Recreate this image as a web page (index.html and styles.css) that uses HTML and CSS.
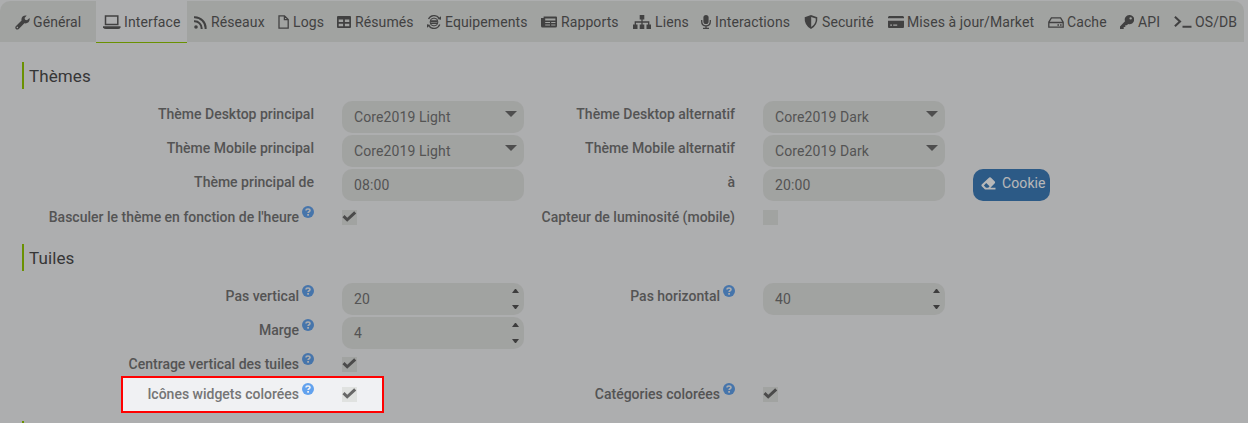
FILE: index.html
```
<!DOCTYPE html>
<html lang="fr">
<head>
<meta charset="utf-8">
<title>Configuration</title>
<link rel="stylesheet" href="styles.css">
</head>
<body>
<svg class="defs" width="0" height="0">
<symbol id="help" viewBox="0 0 12 12"><circle cx="6" cy="6" r="6" fill="#62a2ee"/><path d="M4 4.6C4 2.4 8 2.4 8 4.6C8 5.8 6.1 5.7 6.1 7.1" fill="none" stroke="#f0f1f3" stroke-width="1.6"/><rect x="5.2" y="8" width="1.8" height="1.7" fill="#f0f1f3"/></symbol>
<symbol id="check" viewBox="0 0 15 15"><path d="M1.5 6.2L5.2 9.8L13.2 2.4" fill="none" stroke="currentColor" stroke-width="3"/></symbol>
</svg>
<nav class="tabs">
<a class="tab t-general"><svg width="15" height="15" viewBox="0 0 16 16"><path fill="currentColor" d="M15.5 3.3L12.8 5.5L10.8 5.1L10.2 3.1L12.5.6C9 0 6.2 2.3 7 5.8L.8 12Q-.3 13.4.9 14.8Q2.4 16.1 4 14.8L10 8.9C13.6 9.7 16.5 6.5 15.5 3.3ZM2.5 14A.8.8 0 1 1 2.6 12.4A.8.8 0 0 1 2.5 14Z"/></svg><span>Général</span></a>
<a class="tab t-interface active"><svg width="18" height="14" viewBox="0 0 18 14"><path fill="none" stroke="currentColor" stroke-width="1.5" d="M2.5 1H14.8V9.6H2.5Z"/><path fill="currentColor" d="M0 11.3H17.5V12.5Q17 14 15 14H3Q1 14 0 12.5Z"/></svg><span>Interface</span></a>
<a class="tab t-reseaux"><svg width="13" height="13" viewBox="0 0 13 13"><g fill="none" stroke="currentColor" stroke-width="2"><path d="M0 1.2A11 11 0 0 1 11.6 13M0 5.3A7 7 0 0 1 7.6 13"/></g><circle cx="2" cy="11" r="1.8" fill="currentColor"/></svg><span>Réseaux</span></a>
<a class="tab t-logs"><svg width="11" height="14" viewBox="0 0 11 14"><path fill="none" stroke="currentColor" stroke-width="1.3" d="M1 .8H6.5L10.2 4.5V13.2H1ZM6.4 1V4.7H10"/></svg><span>Logs</span></a>
<a class="tab t-resumes"><svg width="14" height="12" viewBox="0 0 14 12"><path fill="currentColor" fill-rule="evenodd" d="M1 0H13Q14 0 14 1V11Q14 12 13 12H1Q0 12 0 11V1Q0 0 1 0ZM1.7 3.5V6H6.1V3.5ZM7.9 3.5V6H12.3V3.5ZM1.7 7.7V10.3H6.1V7.7ZM7.9 7.7V10.3H12.3V7.7Z"/></svg><span>Résumés</span></a>
<a class="tab t-equip"><svg width="14" height="14" viewBox="0 0 14 14"><g fill="none" stroke="currentColor"><path stroke-width="1.3" d="M1.5 4A6.3 6.3 0 0 1 12 3M12.8 9.5A6.3 6.3 0 0 1 2.2 11.3"/><circle cx="7" cy="7" r="3.9"/><path stroke-width="1.6" d="M3.3 6.1H10.7M3.3 8.2H10.7"/></g><path fill="currentColor" d="M10.4 4.1L14 4.7V1.2ZM3.6 9.9L0 9.3V12.8Z"/></svg><span>Equipements</span></a>
<a class="tab t-rapports"><svg width="16" height="12" viewBox="0 0 16 12"><path fill="currentColor" fill-rule="evenodd" d="M3 .5H15Q16 .5 16 1.5V10Q16 11.5 14.5 11.5H1.5Q0 11.5 0 10V2H2.6V.5ZM4.2 2.4V4.4H14.4V2.4ZM4.2 6V7H9V6ZM10.2 6V7H14.4V6ZM4.2 8.6V9.6H9V8.6ZM10.2 8.6V9.6H14.4V8.6Z"/></svg><span>Rapports</span></a>
<a class="tab t-liens"><svg width="18" height="14" viewBox="0 0 18 14"><path fill="currentColor" d="M6.7 0H11.3V4.5H6.7ZM0 9.5H4.5V14H0ZM6.7 9.5H11.3V14H6.7ZM13.5 9.5H18V14H13.5Z"/><path fill="none" stroke="currentColor" stroke-width="1.3" d="M9 4V10M2.3 10V7H15.7V10"/></svg><span>Liens</span></a>
<a class="tab t-inter"><svg width="10" height="14" viewBox="0 0 10 14"><rect x="2.4" width="5.2" height="9" rx="2.6" fill="currentColor"/><path fill="none" stroke="currentColor" stroke-width="1.3" d="M.7 5V6.5Q.7 10.8 5 10.8T9.3 6.5V5M5 11V13.3M2 13.3H8"/></svg><span>Interactions</span></a>
<a class="tab t-secu"><svg width="14" height="14" viewBox="0 0 14 14"><path fill="currentColor" fill-rule="evenodd" d="M7 0L13.3 2.2Q14 10 7 14Q0 10 .7 2.2ZM7.2 1.9V12Q12.2 8.9 11.8 3.4Z"/></svg><span>Securité</span></a>
<a class="tab t-market"><svg width="16" height="12" viewBox="0 0 16 12"><path fill="currentColor" fill-rule="evenodd" d="M1 0H15L16 1V2.2H0V1ZM0 4.7H16V11Q16 12 15 12H1Q0 12 0 11ZM2.2 8.4V9.7H4V8.4ZM5.2 8.4V9.7H9.2V8.4Z"/></svg><span>Mises à jour/Market</span></a>
<a class="tab t-cache"><svg width="16" height="11" viewBox="0 0 16 11"><path fill="none" stroke="currentColor" stroke-width="1.3" d="M.8 5.2L3.4.8H12.6L15.2 5.2V10.2H.8ZM.8 5.5H15.2"/><path fill="currentColor" d="M9.4 7.2H11V8.7H9.4ZM12 7.2H13.6V8.7H12Z"/></svg><span>Cache</span></a>
<a class="tab t-api"><svg width="14" height="14" viewBox="0 0 14 14"><path fill="currentColor" fill-rule="evenodd" d="M9.4 0A4.6 4.6 0 1 1 8.3 9L6.7 10.3H5.3V11.9H3.7V14H0V11.4L5 6.2A4.6 4.6 0 0 1 9.4 0ZM10.6 2.2A1.2 1.2 0 1 0 10.7 4.6A1.2 1.2 0 0 0 10.6 2.2Z"/></svg><span>API</span></a>
<a class="tab t-os"><svg width="18" height="12" viewBox="0 0 18 12"><path fill="none" stroke="currentColor" stroke-width="2.1" d="M.9.8L6 5.5L.9 10.3M8.5 10.8H17.5"/></svg><span>OS/DB</span></a>
</nav>
<main class="panel">
<h2 class="heading">Thèmes</h2>
<section class="form">
<div class="row"><label class="label">Thème Desktop principal</label><div class="field select">Core2019 Light</div><label class="label">Thème Desktop alternatif</label><div class="field select">Core2019 Dark</div></div>
<div class="row"><label class="label">Thème Mobile principal</label><div class="field select">Core2019 Light</div><label class="label">Thème Mobile alternatif</label><div class="field select">Core2019 Dark</div></div>
<div class="row"><label class="label">Thème principal de</label><div class="field">08:00</div><label class="label">à</label><div class="field">20:00</div><a class="button"><svg width="15" height="13" viewBox="0 0 15 13"><path fill="currentColor" fill-rule="evenodd" d="M8.2.5Q9 0 9.8.6L13.8 4.6Q14.5 5.5 13.8 6.3L9.4 10.8H14.5V12.5H4L.7 9.3Q0 8.3.7 7.5ZM5.2 6L2.9 8.4L5 10.7H7.2L8.6 9.3Z"/></svg><span>Cookie</span></a></div>
<div class="row options"><label class="label">Basculer le thème en fonction de l'heure<svg class="help"><use href="#help"/></svg></label><div class="box"><svg><use href="#check"/></svg></div><label class="label">Capteur de luminosité (mobile)</label><div class="box"></div></div>
</section>
<h2 class="heading">Tuiles</h2>
<section class="form tiles">
<div class="row"><label class="label">Pas vertical<svg class="help"><use href="#help"/></svg></label><div class="field number">20</div><label class="label">Pas horizontal<svg class="help"><use href="#help"/></svg></label><div class="field number">40</div></div>
<div class="row"><label class="label">Marge<svg class="help"><use href="#help"/></svg></label><div class="field number">4</div></div>
<div class="row compact"><label class="label">Centrage vertical des tuiles<svg class="help"><use href="#help"/></svg></label><div class="box"><svg><use href="#check"/></svg></div></div>
<div class="row compact"><label class="label">Icônes widgets colorées<svg class="help"><use href="#help"/></svg></label><div class="box"><svg><use href="#check"/></svg></div><label class="label">Catégories colorées<svg class="help"><use href="#help"/></svg></label><div class="box"><svg><use href="#check"/></svg></div></div>
</section>
<div class="heading"></div>
</main>
<div class="spotlight"></div>
</body>
</html>
```
FILE: styles.css
```
* { box-sizing: border-box; }
html, body { margin: 0; height: 423px; overflow: hidden; }
body { position: relative; background: #f0f1f3; color: #5b5b5b; font: 14px/20px Roboto, sans-serif; letter-spacing: 0.1px; }
svg { display: block; flex: none; }
.defs { position: absolute; }
.tabs { display: flex; width: 1244px; height: 43px; padding-top: 1px; }
.tab { display: flex; align-items: center; gap: 4px; height: 42px; padding: 1px 0 0 7px; background: #e0e2e0; background-clip: padding-box; white-space: nowrap; border-bottom: 1px solid #f0f1f3; }
.tab:first-child { border-top-left-radius: 10px; }
.tab:last-child { border-top-right-radius: 10px; }
.tab.active { background: #f0f1f3; border-bottom: 1px solid #94ca02; }
.t-general { width: 96px; padding-left: 15px; gap: 3px; }
.t-interface { width: 91px; gap: 3px; }
.t-reseaux { width: 84px; }
.t-logs { width: 59px; }
.t-resumes { width: 90px; }
.t-equip { width: 114px; }
.t-rapports { width: 92px; }
.t-liens { width: 68px; }
.t-inter { width: 103px; }
.t-secu { width: 84px; }
.t-market { width: 160px; gap: 3px; }
.t-cache { width: 72px; gap: 3px; }
.t-api { width: 54px; }
.t-os { width: 77px; gap: 3px; }
.panel { height: 380px; padding: 19px 0 0 22px; overflow: hidden; }
.heading { height: 27px; margin: 0; padding-left: 5px; border-left: 2px solid #94ca02; color: #4c4c4c; font-size: 17px; font-weight: 400; line-height: 28px; }
.form { padding: 12px 0 7px; }
.row { display: grid; grid-template-columns: 292px 182px 183px 182px 77px; column-gap: 28px; height: 34px; }
.row.compact { height: 30px; }
.tiles { padding-bottom: 10px; }
.label { display: flex; justify-content: flex-end; gap: 3px; height: 20px; margin-top: 3px; color: #757575; font-weight: 500; letter-spacing: 0; white-space: nowrap; }
.options .label { margin-top: 4px; }
.help { width: 12px; height: 12px; margin-top: -1.5px; }
.field { display: flex; align-items: center; justify-content: space-between; height: 32px; padding: 0 12px; border-radius: 10px; background: #e0e2e0; color: #757575; }
.select { padding-right: 7px; }
.select::after { content: ""; margin-top: -7px; border: 6px solid transparent; border-top-color: #6c6c6c; border-bottom: 0; }
.number { padding-right: 5px; }
.number::after { content: ""; width: 7px; height: 20px; background: #555; clip-path: polygon(0 4px, 3px 0, 4px 0, 7px 4px, 0 4px, 0 16px, 7px 16px, 4px 20px, 3px 20px, 0 16px); }
.box { width: 15px; height: 15px; margin-top: 6px; background: #e0e2e0; color: #686868; }
.options .box { margin-top: 7px; }
.box svg { width: 15px; height: 15px; }
.button { display: flex; align-items: center; gap: 6px; height: 32px; padding: 0 0 4px 8px; border-radius: 10px; background: #3d7dba; color: #fff; white-space: nowrap; }
.spotlight { position: absolute; left: 121px; top: 376px; width: 263px; height: 37px; box-shadow: 0 0 0 1300px rgba(0, 0, 0, 0.28), inset 0 0 0 2px #f00; }
```
